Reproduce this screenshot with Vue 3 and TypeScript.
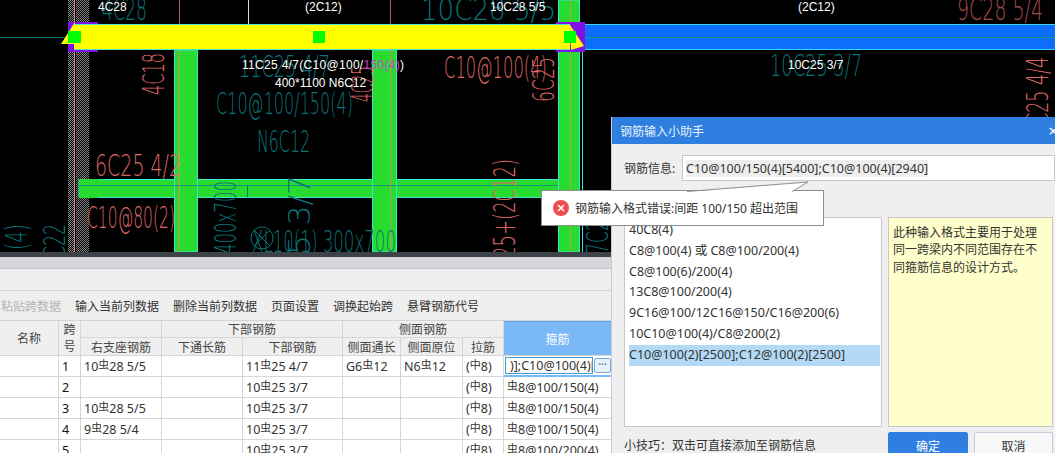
<script setup lang="ts">
interface CadText { t: string; x: number; y: number; w: number; s: number; c: string; r?: boolean }
const teal = '#0b7478'
const pink = '#dc6660'
const cadTexts: CadText[] = [
  { t: '4C28', x: 102, y: 20, w: 45, s: 30, c: teal },
  { t: '10C28 5/5', x: 421, y: 20, w: 135, s: 30, c: teal },
  { t: '11C25 4/7', x: 239, y: 77, w: 91, s: 30, c: teal },
  { t: 'C10@100/150(4)', x: 216, y: 114, w: 137, s: 30, c: teal },
  { t: 'N6C12', x: 257, y: 152, w: 53, s: 30, c: teal },
  { t: 'XL10(1) 300x700', x: 252, y: 252, w: 144, s: 30, c: teal },
  { t: '10C25 3/7', x: 770, y: 76, w: 92, s: 30, c: teal },
  { t: '400x700', x: 236, y: 254, w: 73, s: 30, c: teal, r: true },
  { t: '25 3/7', x: 310, y: 275, w: 100, s: 30, c: teal, r: true },
  { t: '(4)', x: 27, y: 250, w: 26, s: 30, c: teal, r: true },
  { t: 'C22', x: 65, y: 258, w: 34, s: 30, c: teal, r: true },
  { t: '7C25', x: 608, y: 254, w: 45, s: 30, c: teal, r: true },
  { t: 'C10@100(4)', x: 444, y: 78, w: 103, s: 30, c: pink },
  { t: '6C25 4/2', x: 95, y: 176, w: 86, s: 30, c: pink },
  { t: 'C10@80(2)', x: 87, y: 228, w: 88, s: 30, c: pink },
  { t: '9C28 5/4', x: 957, y: 20, w: 86, s: 30, c: '#a84c4c' },
  { t: '4C18', x: 164, y: 95, w: 42, s: 30, c: pink, r: true },
  { t: '4C25', x: 373, y: 102, w: 36, s: 30, c: pink, r: true },
  { t: '6C25', x: 554, y: 102, w: 45, s: 30, c: pink, r: true },
  { t: '25+(2C12)', x: 515, y: 258, w: 99, s: 30, c: pink, r: true },
  { t: 'C25 4/4', x: 1048, y: 125, w: 68, s: 30, c: pink, r: true },
]
const whiteTexts = [
  { t: '4C28', x: 98, y: 11 },
  { t: '(2C12)', x: 305, y: 11 },
  { t: '10C28 5/5', x: 490, y: 11 },
  { t: '(2C12)', x: 798, y: 11 },
  { t: '400*1100 N6C12', x: 275, y: 87 },
  { t: '10C25 3/7', x: 788, y: 69 },
]

const listItems = [
  '40C8(4)',
  'C8@100(4) 或 C8@100/200(4)',
  'C8@100(6)/200(4)',
  '13C8@100/200(4)',
  '9C16@100/12C16@150/C16@200(6)',
  '10C10@100(4)/C8@200(2)',
  'C10@100(2)[2500];C12@100(2)[2500]',
]
const toolbar = ['输入当前列数据', '删除当前列数据', '页面设置', '调换起始跨', '悬臂钢筋代号']

const rows = [
  ['', '1', '10$28 5/5', '', '11$25 4/7', 'G6$12', 'N6$12', '(%8)', ''],
  ['', '2', '', '', '10$25 3/7', '', '', '(%8)', '$8@100/150(4)'],
  ['', '3', '10$28 5/5', '', '10$25 3/7', '', '', '(%8)', '$8@100/150(4)'],
  ['', '4', '9$28 5/4', '', '10$25 3/7', '', '', '(%8)', '$8@100/150(4)'],
  ['', '5', '', '', '10$25 3/7', '', '', '(%8)', '$8@100/200(4)'],
]
function parts(s: string): { text: string; sym: boolean }[] {
  return s
    .split(/([$%])/)
    .filter((p) => p !== '')
    .map((p) => (p === '$' ? { text: '虫', sym: true } : p === '%' ? { text: '中', sym: true } : { text: p, sym: false }))
}
</script>

<template>
  <div class="screen">
    <div class="cad">
      <svg width="1055" height="252" viewBox="0 0 1055 252">
        <defs>
          <pattern id="dots" width="2" height="2" patternUnits="userSpaceOnUse">
            <rect width="1" height="1" fill="#8a8a8a" />
            <rect x="1" y="1" width="1" height="1" fill="#787878" />
          </pattern>
        </defs>
        <rect width="1055" height="252" fill="#000" />
        <rect x="68" y="0" width="21" height="252" fill="url(#dots)" />
        <rect x="74" y="0" width="2" height="252" fill="#000" />
        <line x1="74.500" y1="0" x2="74.500" y2="252" stroke="#e08a80" />
        <line x1="0" y1="37.500" x2="72" y2="37.500" stroke="#0b7478" />
        <line x1="179.500" y1="0" x2="179.500" y2="25" stroke="#a06060" />
        <line x1="248.500" y1="0" x2="248.500" y2="25" stroke="#c8e8e8" />
        <line x1="390.500" y1="0" x2="390.500" y2="25" stroke="#a06060" />

        <rect x="79" y="179.500" width="500" height="18" fill="#27dc2e" stroke="#36e8d0" />
        <rect x="79" y="179" width="19" height="19" fill="#27dc2e" />
        <rect x="174.500" y="50" width="23" height="202" fill="#27dc2e" stroke="#36e8d0" />
        <rect x="372.500" y="50" width="24" height="202" fill="#27dc2e" stroke="#36e8d0" />
        <rect x="558.500" y="0" width="21" height="252" fill="#27dc2e" stroke="#36e8d0" />
        <line x1="582.500" y1="50" x2="582.500" y2="252" stroke="#36e8d0" />
        <line x1="79" y1="185.500" x2="558" y2="185.500" stroke="#1a8f80" />
        <line x1="247.500" y1="186" x2="247.500" y2="197" stroke="#0b7478" />
        <line x1="179.500" y1="50" x2="179.500" y2="252" stroke="#d98a70" />
        <line x1="390.500" y1="50" x2="390.500" y2="252" stroke="#b89a60" />
        <line x1="570.500" y1="0" x2="570.500" y2="252" stroke="#b89a60" />

        <g font-family="'DejaVu Sans ExtraLight','DejaVu Sans',sans-serif" font-weight="200">
          <template v-for="item in cadTexts" :key="item.t + item.x">
            <text
              :x="item.x"
              :y="item.y"
              :fill="item.c"
              :font-size="item.s"
              :textLength="item.w"
              lengthAdjust="spacingAndGlyphs"
              :transform="item.r ? `rotate(-90 ${item.x} ${item.y})` : undefined"
            >{{ item.t }}</text>
          </template>
        </g>
        <circle cx="262" cy="238" r="11" fill="none" stroke="#0b7478" />
        <line x1="254" y1="230" x2="270" y2="246" stroke="#0b7478" />
        <line x1="270" y1="230" x2="254" y2="246" stroke="#0b7478" />

        <rect x="570" y="25" width="485" height="25" fill="#0d6efc" />
        <line x1="570" y1="24.500" x2="1055" y2="24.500" stroke="#36d8f0" />
        <line x1="570" y1="49.500" x2="1055" y2="49.500" stroke="#36d8f0" />
        <line x1="570" y1="37.500" x2="1055" y2="37.500" stroke="#0f9a98" />

        <rect x="68" y="22" width="30" height="30" fill="#8010e8" />
        <rect x="556" y="22" width="29" height="30" fill="#8010e8" />
        <rect x="74" y="25" width="496" height="25" fill="#ffff00" />
        <line x1="74" y1="24.500" x2="570" y2="24.500" stroke="#58e0c8" />
        <line x1="74" y1="49.500" x2="570" y2="49.500" stroke="#58e0c8" />
        <polygon points="75,22 61,44 75,44" fill="#ffff00" />
        <polygon points="570,25 571,50 584,46" fill="#ffff00" />
        <rect x="68" y="31" width="13" height="12" fill="#00ff00" />
        <rect x="313" y="31" width="12" height="12" fill="#00ff00" />
        <rect x="564" y="31" width="12" height="12" fill="#00ff00" />

        <g font-family="'Liberation Sans',sans-serif" font-size="12" fill="#fff">
          <text v-for="w in whiteTexts" :key="w.t + w.x" :x="w.x" :y="w.y">{{ w.t }}</text>
          <text x="242" y="69" textLength="162" lengthAdjust="spacing">11C25 4/7(C10@100/<tspan fill="#d040d0">150(4)</tspan>)</text>
        </g>
      </svg>
    </div>

    <div class="panel">
      <div class="edge"></div>
      <div class="tabs"></div>
      <div class="blank"></div>
      <div class="toolbar">
        <span class="tool off">粘贴跨数据</span>
        <span v-for="t in toolbar" :key="t" class="tool">{{ t }}</span>
      </div>
      <div class="grid">
        <div class="h r2">名称</div>
        <div class="h r2 narrow">跨<br />号</div>
        <div class="h"></div>
        <div class="h c2">下部钢筋</div>
        <div class="h c3">侧面钢筋</div>
        <div class="h r2 blue">箍筋</div>
        <div class="h">右支座钢筋</div>
        <div class="h">下通长筋</div>
        <div class="h">下部钢筋</div>
        <div class="h">侧面通长</div>
        <div class="h">侧面原位</div>
        <div class="h">拉筋</div>
        <template v-for="(row, ri) in rows" :key="ri">
          <div v-for="(cell, ci) in row" :key="ci" class="d" :class="{ idx: ci === 1, active: ri === 0 && ci === 8 }">
            <template v-if="ri === 0 && ci === 8">
              <div class="editor">)];C10@100(4)[</div>
              <div class="dots">···</div>
            </template>
            <template v-else>
              <template v-for="(p, pi) in parts(cell)" :key="pi">
                <span v-if="p.sym" class="sym">{{ p.text }}</span>
                <template v-else>{{ p.text }}</template>
              </template>
            </template>
          </div>
        </template>
      </div>
    </div>

    <div class="dialog">
      <div class="title">
        <span>钢筋输入小助手</span>
        <span class="close">×</span>
      </div>
      <div class="form">
        <label class="lab">钢筋信息:</label>
        <div class="field"><span class="sel">C10@100/150(4)[5400];C10@100(4)[2940]</span></div>
      </div>
      <div class="body">
        <div class="list">
          <div v-for="(item, i) in listItems" :key="item" class="li" :class="{ on: i === listItems.length - 1 }">{{ item }}</div>
        </div>
        <div class="note">此种输入格式主要用于处理同一跨梁内不同范围存在不同箍筋信息的设计方式。</div>
      </div>
      <div class="foot">
        <span class="tip-text">小技巧：双击可直接添加至钢筋信息</span>
        <div class="btns">
          <div class="btn primary">确定</div>
          <div class="btn second">取消</div>
        </div>
      </div>
    </div>

    <div class="tooltip">
      <svg class="tail" width="150" height="11" viewBox="0 0 150 11">
        <polygon points="0,11 121,1 104,11" fill="#fff" />
        <polyline points="0,10.500 121,1 105,10.500" fill="none" stroke="#8d8d8d" />
      </svg>
      <svg class="err" width="16" height="16" viewBox="0 0 16 16">
        <circle cx="8" cy="8" r="8" fill="#ef4a52" />
        <path d="M5 5l6 6M11 5l-6 6" stroke="#fff" stroke-width="1.700" />
      </svg>
      <span>钢筋输入格式错误:间距 100/150 超出范围</span>
    </div>
  </div>
</template>

<style>
html,
body {
  margin: 0;
  padding: 0;
  background: #000;
}
</style>

<style scoped>
.screen {
  position: relative;
  width: 1055px;
  height: 453px;
  overflow: hidden;
  display: flex;
  flex-direction: column;
  font-family: "Noto Sans", "Noto Sans CJK SC", sans-serif;
  font-size: 12px;
  color: #333;
  background: #efefef;
}
.cad {
  height: 252px;
  flex: none;
  line-height: 0;
}
.panel {
  flex: 1;
  min-height: 0;
  overflow: hidden;
  display: flex;
  flex-direction: column;
  background: #efefef;
}
.edge {
  height: 5px;
  flex: none;
  background: #3d4348;
}
.tabs {
  height: 11px;
  flex: none;
  background: #d3d5da;
  border-bottom: 1px solid #c2c4c8;
}
.blank {
  height: 21px;
  flex: none;
  border-bottom: 1px solid #d4d4d4;
}
.toolbar {
  height: 29px;
  flex: none;
  display: flex;
  align-items: center;
  gap: 14px;
  border-bottom: 1px solid #d4d4d4;
}
.tool {
  white-space: nowrap;
}
.tool.off {
  color: #b4b4b4;
  margin-left: 1px;
}
.grid {
  display: grid;
  grid-template-columns: 59px 22px 81px 81px 100px 58px 62px 41px 108px;
  grid-template-rows: 17px 18px repeat(5, 21px);
  width: 612px;
  border-right: 1px solid #c4cbdb;
}
.h {
  display: flex;
  align-items: center;
  justify-content: center;
  background: #efefef;
  border-right: 1px solid #d6d6d6;
  border-bottom: 1px solid #d6d6d6;
  color: #444;
  overflow: hidden;
  white-space: nowrap;
}
.r2 {
  grid-row: span 2;
}
.c2 {
  grid-column: span 2;
}
.c3 {
  grid-column: span 3;
}
.narrow {
  line-height: 17px;
  text-align: center;
}
.blue {
  background: #7bb8f8;
  color: #fff;
  border-top: 1px solid #5a9fea;
}
.d {
  background: #fff;
  border-right: 1px solid #d6d6d6;
  border-bottom: 1px solid #d6d6d6;
  padding-left: 3px;
  display: flex;
  align-items: center;
  white-space: pre;
  overflow: hidden;
  color: #333;
  font-size: 12.500px;
}
.idx {
  padding-left: 3px;
  color: #111;
}
.sym {
  font-size: 11px;
  position: relative;
  top: -2px;
}
.active {
  padding: 1px 2px 1px 1px;
  gap: 1px;
  border-bottom: 2px solid #7bb8f8;
}
.editor {
  width: 88px;
  height: 17px;
  flex: none;
  box-sizing: border-box;
  border: 1px solid #3f9ccf;
  padding-left: 4px;
  line-height: 15px;
  overflow: hidden;
}
.dots {
  width: 15px;
  height: 13px;
  flex: none;
  border: 1px solid #7fa8d8;
  border-radius: 2px;
  background: #e8f0fb;
  color: #5a7fb0;
  font-size: 10px;
  font-weight: 700;
  line-height: 11px;
  text-align: center;
}
.dialog {
  position: absolute;
  left: 611px;
  top: 117px;
  width: 444px;
  height: 336px;
  box-sizing: border-box;
  background: #efefef;
  border-left: 1px solid #c5cbd8;
  display: flex;
  flex-direction: column;
}
.title {
  height: 27px;
  flex: none;
  display: flex;
  justify-content: space-between;
  align-items: center;
  padding: 0 0 0 8px;
  background: #2f7fe0;
  color: #e8f1fc;
}
.close {
  font-size: 17px;
  color: #fff;
  margin-right: -3px;
}
.form {
  height: 26px;
  margin-top: 11px;
  flex: none;
  display: flex;
  align-items: center;
  padding-left: 12px;
}
.lab {
  width: 58px;
  flex: none;
}
.field {
  flex: 1;
  height: 100%;
  box-sizing: border-box;
  background: #fff;
  border: 1px solid #c8c8c8;
  display: flex;
  align-items: center;
  padding-left: 3px;
}
.sel {
  background: #eeeeee;
  line-height: 17px;
  font-size: 12.500px;
}
.body {
  height: 210px;
  margin-top: 36px;
  flex: none;
  display: flex;
  gap: 6px;
  padding: 0 2px 0 12px;
}
.list {
  width: 258px;
  flex: none;
  box-sizing: border-box;
  background: #fff;
  border: 1px solid #c8c8c8;
  padding: 2px 1px 0 4px;
}
.li {
  height: 20.800px;
  line-height: 20.800px;
  font-size: 12.500px;
  white-space: nowrap;
}
.li.on {
  background: #b2d9f5;
}
.note {
  flex: 1;
  box-sizing: border-box;
  background: #ffffcc;
  border: 1px solid #c8c8c8;
  padding: 6px 4px;
  line-height: 17.300px;
}
.foot {
  flex: 1;
  display: flex;
  justify-content: space-between;
  padding: 5px 2px 0 12px;
}
.tip-text {
  padding-top: 4px;
}
.btns {
  display: flex;
  gap: 6px;
}
.btn {
  width: 80px;
  height: 30px;
  box-sizing: border-box;
  border: 1px solid #c4cbdb;
  border-radius: 2px;
  background: #f8f8f8;
  text-align: center;
  line-height: 28px;
}
.btn.second {
  width: 79px;
}
.btn.primary {
  background: #2f7fe0;
  border-color: #2f7fe0;
  color: #fff;
}
.tooltip {
  position: absolute;
  left: 541px;
  top: 190px;
  width: 283px;
  height: 36px;
  box-sizing: border-box;
  background: #fff;
  border: 1px solid #8d8d8d;
  display: flex;
  align-items: center;
  gap: 6px;
  padding-left: 11px;
  white-space: nowrap;
}
.tail {
  position: absolute;
  left: 145px;
  top: -10px;
}
.err {
  flex: none;
}
</style>
